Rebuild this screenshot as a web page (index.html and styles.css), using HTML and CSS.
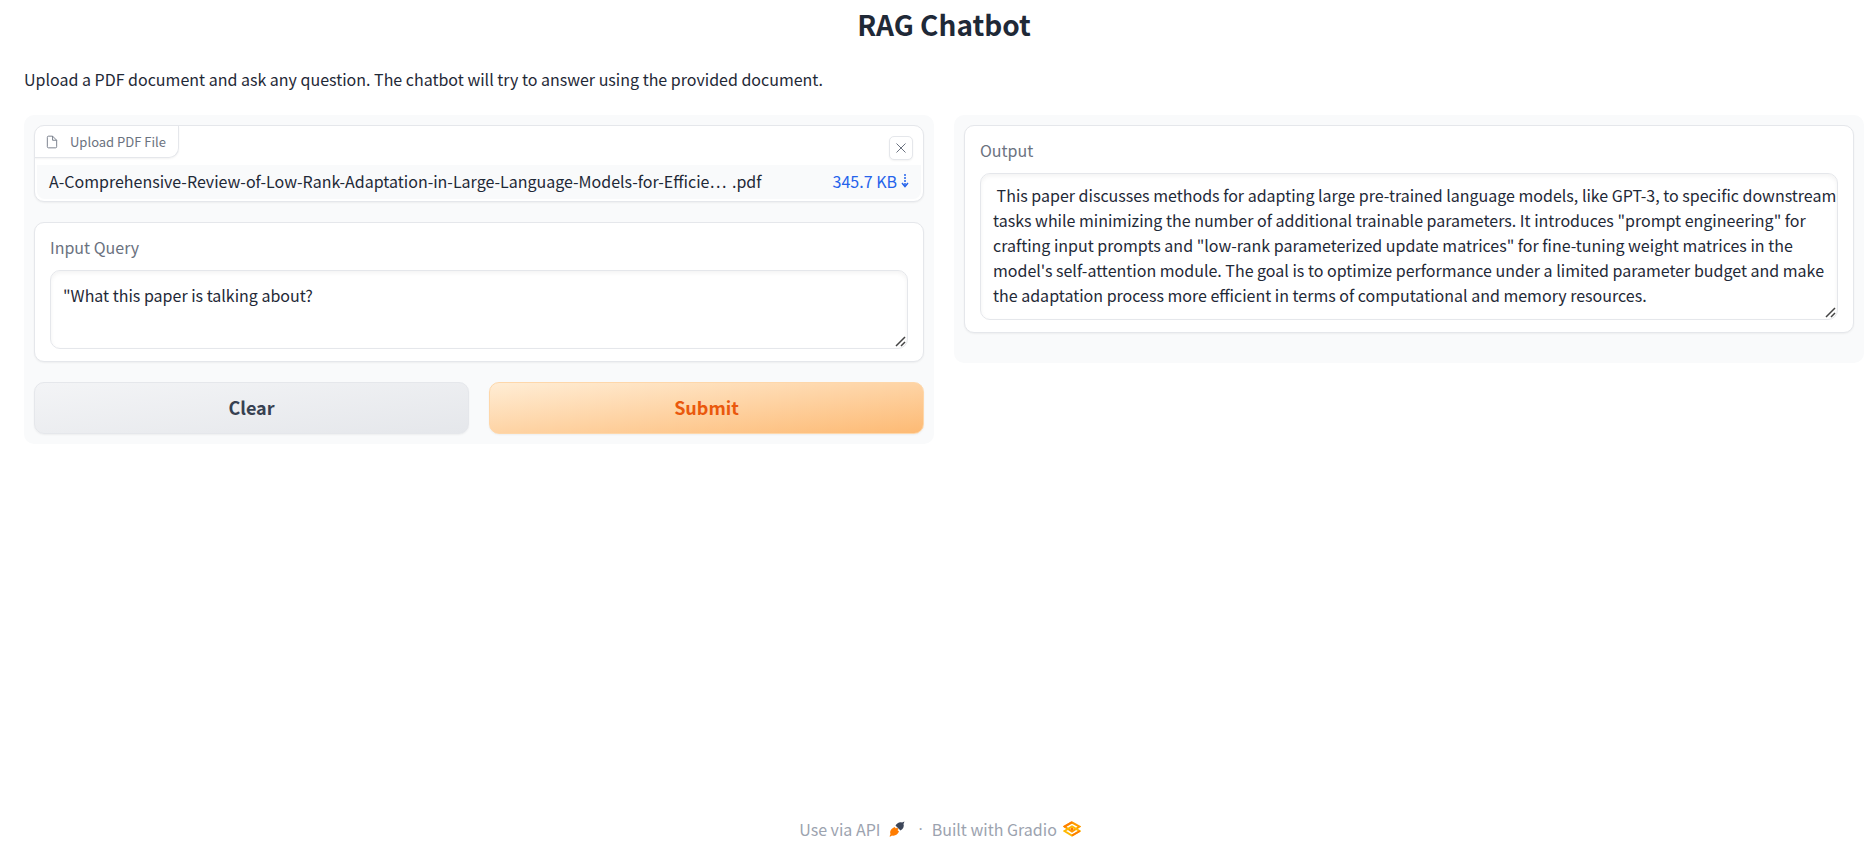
FILE: index.html
```html
<!DOCTYPE html>
<html lang="en">
<head>
<meta charset="utf-8">
<title>RAG Chatbot</title>
<link rel="stylesheet" href="styles.css">
</head>
<body>
<main class="app">
  <h1 class="title">RAG Chatbot</h1>
  <p class="intro">Upload a PDF document and ask any question. The chatbot will try to answer using the provided document.</p>
  <div class="columns">
    <section class="panel">
      <div class="block file-block">
        <div class="file-head">
          <span class="file-label">
            <svg class="file-icon" viewBox="0 0 24 24" aria-hidden="true"><path d="M13 2H6a2 2 0 0 0-2 2v16a2 2 0 0 0 2 2h12a2 2 0 0 0 2-2V9z"/><path d="M13 2v7h7"/></svg>
            Upload PDF File
          </span>
          <button class="close" type="button" aria-label="Remove file">
            <svg viewBox="0 0 12 12" aria-hidden="true"><path d="M1.500 1.500L10.500 10.500M10.500 1.500L1.500 10.500"/></svg>
          </button>
        </div>
        <div class="file-row">
          <span class="file-name">A-Comprehensive-Review-of-Low-Rank-Adaptation-in-Large-Language-Models-for-Efficie… <span class="ext">.pdf</span></span>
          <a class="download" href="#">345.7 KB
            <svg viewBox="0 0 8 14" aria-hidden="true"><path d="M4 0V12" stroke-dasharray="2 1"/><path d="M1 9L4 12.500L7 9"/></svg>
          </a>
        </div>
      </div>
      <div class="block text-block">
        <label for="query">Input Query</label>
        <div class="field">
          <textarea id="query" class="query" spellcheck="false">"What this paper is talking about?</textarea>
          <svg class="grip" viewBox="0 0 11 11" aria-hidden="true"><path d="M1 10L10 1M6 10L10 6"/></svg>
        </div>
      </div>
      <div class="actions">
        <button class="btn secondary" type="button">Clear</button>
        <button class="btn primary" type="button">Submit</button>
      </div>
    </section>
    <section class="panel output-panel">
      <div class="block text-block">
        <label for="output">Output</label>
        <div class="field">
          <textarea id="output" class="output" spellcheck="false"> This paper discusses methods for adapting large pre-trained language models, like GPT-3, to specific downstream
tasks while minimizing the number of additional trainable parameters. It introduces "prompt engineering" for
crafting input prompts and "low-rank parameterized update matrices" for fine-tuning weight matrices in the
model's self-attention module. The goal is to optimize performance under a limited parameter budget and make
the adaptation process more efficient in terms of computational and memory resources.</textarea>
          <svg class="grip" viewBox="0 0 11 11" aria-hidden="true"><path d="M1 10L10 1M6 10L10 6"/></svg>
        </div>
      </div>
    </section>
  </div>
</main>
<footer class="footer">
  <a href="#">Use via API
    <svg class="rocket" viewBox="0 0 16 16" aria-hidden="true"><path fill="#ff7c00" d="M0.500 15.500L1.500 13C0.500 10.500 2 8 4 7L5.500 6L7 7.500L8 6.500L9.500 8L8.500 9L10 10.500C9 13 6 15.500 3 14.500L1.500 15.500Z"/><path fill="#3c4659" d="M15.500 0.500L14.500 3C15.500 5.500 14 8 11.500 9.500L6.500 4.500C8 2 10.500 0.500 13 1.500Z"/></svg>
  </a>
  <span class="dot">·</span>
  <a href="#">Built with Gradio
    <svg class="gradio" viewBox="0 0 18 16" aria-hidden="true"><path d="M1.500 5.500L9 1.500L16.500 5.500L9 10.500Z" fill="none" stroke="#ff9b00" stroke-width="2"/><path d="M1.500 10L9 5.500L16.500 10L9 14.500Z" fill="none" stroke="#ffb900" stroke-width="2"/><path d="M1 6L9 1" stroke="#ff7c00" stroke-width="2"/><path d="M9 14.500L17 10" stroke="#ff7c00" stroke-width="2"/><circle cx="9" cy="8" r="1.500" fill="#ff7c00"/></svg>
  </a>
</footer>
</body>
</html>
```
FILE: styles.css
```css
* { box-sizing: border-box; }
body {
  margin: 0;
  min-height: 100vh;
  display: flex;
  flex-direction: column;
  background: #fff;
  color: #1f2937;
  font: 16px/24px "Noto Sans CJK SC", "Open Sans", sans-serif;
}
button, textarea { font: inherit; color: inherit; }
a { color: inherit; text-decoration: none; }
.app { flex: 1; padding: 0 12px 0 24px; }
.title { margin: 0; padding-top: 4px; text-align: center; font-size: 28px; line-height: 40px; font-weight: 600; }
.intro { margin: 23px 0 24px; }
.columns { display: grid; grid-template-columns: 1fr 1fr; gap: 20px; align-items: start; }
.panel { display: flex; flex-direction: column; gap: 20px; padding: 10px; border-radius: 10px; background: #f9fafb; min-width: 0; }
.output-panel { padding-bottom: 30px; }
.block { border: 1px solid #e5e7eb; border-radius: 10px; background: #fff; box-shadow: 0 1px 2px rgba(0, 0, 0, .05); }
.file-block { overflow: hidden; padding-bottom: 2px; }
.file-head { display: flex; justify-content: space-between; align-items: flex-start; height: 39px; }
.file-label {
  display: flex; align-items: center; gap: 11px; height: 32px; padding: 0 12px 0 10px;
  border: solid #e5e7eb; border-width: 0 1px 1px 0; border-radius: 0 0 10px 0;
  color: #6b7280; font-size: 13px; box-shadow: 0 1px 2px rgba(0, 0, 0, .05);
}
.file-icon { width: 14px; height: 14px; fill: none; stroke: #6b7280; stroke-width: 1.500; }
.close {
  display: grid; place-items: center; width: 24px; height: 24px; margin: 10px 10px 0 0; padding: 0;
  border: 1px solid #e5e7eb; border-radius: 5px; background: #fff; box-shadow: 0 1px 2px rgba(0, 0, 0, .05);
}
.close svg { width: 12px; height: 12px; fill: none; stroke: #6b7280; stroke-width: 1; }
.file-row { display: flex; justify-content: space-between; align-items: center; height: 34px; margin: 0 2px; padding: 0 12px 2px; border-radius: 0 0 8px 8px; background: #f9fafb; }
.file-name { white-space: nowrap; }
.ext { margin-left: 2px; }
.download { display: flex; align-items: center; gap: 4px; color: #2563eb; }
.download svg { width: 8px; height: 14px; fill: none; stroke: #2563eb; stroke-width: 1.500; }
.text-block { padding: 12px 15px; }
.text-block label { display: block; margin-bottom: 11px; color: #6b7280; }
.field { position: relative; }
textarea {
  display: block; width: 100%; padding: 12px; border: 1px solid #e5e7eb; border-radius: 10px;
  background: #fff; box-shadow: inset 0 2px 4px rgba(0, 0, 0, .05); resize: none; overflow: hidden; outline: none;
}
.query { height: 79px; }
.output { height: 147px; padding: 9px 0 0 12px; white-space: pre; line-height: 25px; }
.grip { position: absolute; right: 2px; bottom: 2px; width: 11px; height: 11px; fill: none; stroke: #444; stroke-width: 1.500; }
.actions { display: grid; grid-template-columns: 1fr 1fr; gap: 20px; }
.btn { height: 52px; padding: 0 0 2px; border: 1px solid #e5e7eb; border-radius: 10px; font-size: 18px; font-weight: 600; box-shadow: 0 1px 2px rgba(0, 0, 0, .05); }
.secondary { color: #374151; background: linear-gradient(to bottom right, #f3f4f6, #e5e7eb); }
.primary { color: #ea580c; border-color: #fed7aa; background: linear-gradient(to bottom right, #ffedd5, #fdba74); }
.footer { display: flex; justify-content: center; align-items: center; padding: 0 0 21px 4px; color: #9ca3af; }
.footer a { display: flex; align-items: center; gap: 6px; }
.footer .dot { margin: 0 9px 0 13px; font-family: "Open Sans", sans-serif; }
.rocket { width: 16px; height: 16px; margin-left: 3px; }
.gradio { width: 18px; height: 16px; }
```
